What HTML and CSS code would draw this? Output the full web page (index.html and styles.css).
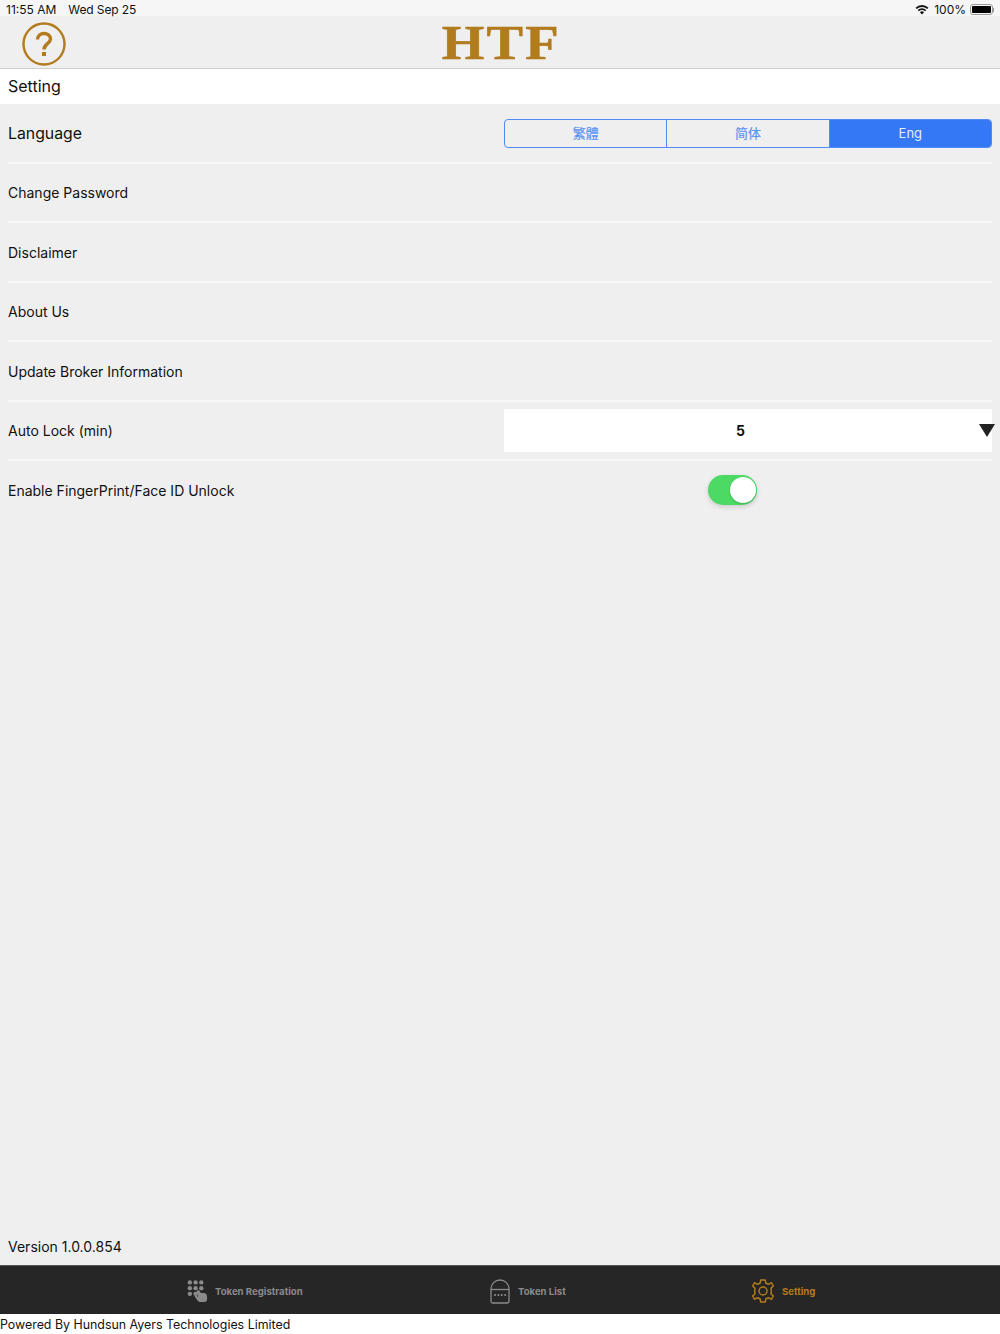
FILE: index.html
```html
<!DOCTYPE html>
<html lang="en">
<head>
    <meta charset="UTF-8">
    <meta name="viewport" content="width=device-width, initial-scale=1.0">
    <title>HTF Setting</title>
    <link rel="stylesheet" href="styles.css">
</head>
<body>
    <div class="app">

        <!-- Status bar -->
        <div class="status-bar">
            <div class="status-time">11:55 AM<span class="status-date">Wed Sep 25</span></div>
            <div class="status-right">
                <svg class="wifi" width="14" height="11" viewBox="0 0 16 12">
                    <path d="M0.6 4 A10.6 10.6 0 0 1 15.4 4 L14 5.5 A8.6 8.6 0 0 0 2 5.5 Z" fill="#111"/>
                    <path d="M3.1 6.6 A7 7 0 0 1 12.9 6.6 L11.5 8 A5 5 0 0 0 4.5 8 Z" fill="#111"/>
                    <path d="M5.6 9.1 A3.4 3.4 0 0 1 10.4 9.1 L8 11.6 Z" fill="#111"/>
                </svg>
                <span>100%</span>
                <div class="battery"><div class="battery-fill"></div></div>
                <div class="battery-tip"></div>
            </div>
        </div>

        <!-- Header -->
        <div class="header">
            <svg class="help-icon" width="44" height="44" viewBox="0 0 44 44">
                <circle cx="22" cy="22" r="20.5" fill="none" stroke="#b27b1e" stroke-width="2.4"/>
                <path d="M15.5 17.5 C15.5 9.5 28.5 9.5 28.5 17 C28.5 21.5 22 22 22 27.5" fill="none" stroke="#b27b1e" stroke-width="3.4"/>
                <rect x="20" y="30" width="4" height="4" fill="#b27b1e"/>
            </svg>
            <div class="logo">HTF</div>
        </div>

        <div class="page-title">Setting</div>

        <!-- Settings list -->
        <div class="content">
            <div class="row">
                <div class="row-label row-label-big">Language</div>
                <div class="row-control">
                    <div class="segment">
                        <div class="segment-item">繁體</div>
                        <div class="segment-item">简体</div>
                        <div class="segment-item active">Eng</div>
                    </div>
                </div>
            </div>
            <div class="row"><div class="row-label">Change Password</div></div>
            <div class="row"><div class="row-label">Disclaimer</div></div>
            <div class="row"><div class="row-label">About Us</div></div>
            <div class="row"><div class="row-label">Update Broker Information</div></div>
            <div class="row">
                <div class="row-label">Auto Lock (min)</div>
                <div class="row-control">
                    <div class="select">
                        <span class="select-value">5</span>
                        <div class="select-arrow"></div>
                    </div>
                </div>
            </div>
            <div class="row row-last">
                <div class="row-label">Enable FingerPrint/Face ID Unlock</div>
                <div class="row-control">
                    <div class="switch"><div class="switch-knob"></div></div>
                </div>
            </div>
        </div>

        <div class="version">Version 1.0.0.854</div>

        <!-- Tab bar -->
        <div class="tabbar">
            <div class="tab tab-register">
                <svg width="21" height="24" viewBox="0 0 22 24" fill="#8a8a8a">
                    <circle cx="3" cy="3" r="2.3"/><circle cx="9" cy="3" r="2.3"/><circle cx="15" cy="3" r="2.3"/>
                    <circle cx="3" cy="9" r="2.3"/><circle cx="9" cy="9" r="2.3"/><circle cx="15" cy="9" r="2.3"/>
                    <circle cx="3" cy="15" r="2.3"/><circle cx="9" cy="15" r="2.3"/>
                    <path d="M10 12 L12.5 11 L14.5 14 L18 14 Q21 14.5 21 18 L21 21 Q21 23.5 18 23.5 L13.5 23.5 Q12 23.5 11 22 L8 17.5 L9.5 16.5 L11.8 18.5 Z"/>
                </svg>
                <span class="tab-label">Token Registration</span>
            </div>
            <div class="tab tab-list">
                <svg width="20" height="25" viewBox="0 0 20 25" fill="none" stroke="#8a8a8a" stroke-width="1.3">
                    <path d="M1 10 A9 9 0 0 1 19 10 L19 22 Q19 24 17 24 L3 24 Q1 24 1 22 Z"/>
                    <path d="M1 10.5 L19 10.5"/>
                    <g fill="#8a8a8a" stroke="none">
                        <circle cx="5" cy="16" r="1.1"/><circle cx="8.4" cy="16" r="1.1"/><circle cx="11.8" cy="16" r="1.1"/><circle cx="15.2" cy="16" r="1.1"/>
                    </g>
                </svg>
                <span class="tab-label">Token List</span>
            </div>
            <div class="tab active">
                <svg width="24" height="24" viewBox="0 0 24 24" fill="none" stroke="#b27b1e" stroke-width="1.5">
                    <path d="M9.8 1 H14.2 L15 4.2 L17.6 5.3 L20.4 3.7 L22.3 7 L20 9.3 L20.3 12 L20 14.7 L22.3 17 L20.4 20.3 L17.6 18.7 L15 19.8 L14.2 23 H9.8 L9 19.8 L6.4 18.7 L3.6 20.3 L1.7 17 L4 14.7 L3.7 12 L4 9.3 L1.7 7 L3.6 3.7 L6.4 5.3 L9 4.2 Z" stroke-linejoin="round"/>
                    <circle cx="12" cy="12" r="4"/>
                </svg>
                <span class="tab-label">Setting</span>
            </div>
        </div>

        <div class="footer">Powered By Hundsun Ayers Technologies Limited</div>
    </div>
</body>
</html>
```

FILE: styles.css
```css
* {
    box-sizing: border-box;
}

body {
    font-family: Inter, "Liberation Sans", sans-serif;
    margin: 0;
    padding: 0;
    background-color: #efefef;
    color: #111;
}

.app {
    width: 1000px;
    height: 1334px;
    display: flex;
    flex-direction: column;
    overflow: hidden;
}

/* Status bar */
.status-bar {
    height: 16px;
    background-color: #f6f6f6;
    display: flex;
    justify-content: space-between;
    align-items: center;
    padding: 3px 6px 0 6px;
    font-size: 12px;
}

.status-date {
    margin-left: 12px;
    letter-spacing: -0.1px;
}

.status-right {
    display: flex;
    align-items: center;
}

.wifi {
    margin-right: 5px;
}

.battery {
    width: 23px;
    height: 11px;
    border: 1px solid #999;
    border-radius: 3px;
    padding: 1px;
    margin-left: 4px;
}

.battery-fill {
    height: 100%;
    background-color: #000;
    border-radius: 1px;
}

.battery-tip {
    width: 1px;
    height: 4px;
    background-color: #999;
}

/* Header */
.header {
    height: 53px;
    border-bottom: 1px solid #cfcfcf;
    display: flex;
    align-items: center;
    justify-content: center;
    position: relative;
}

.help-icon {
    position: absolute;
    left: 22px;
    top: 6px;
}

.logo {
    font-family: "Liberation Serif", serif;
    font-weight: bold;
    font-size: 48px;
    line-height: 52px;
    letter-spacing: 2px;
    color: #b27b1e;
    -webkit-text-stroke: 0.6px #b27b1e;
    transform: translate(1px, 1px) scaleX(1.14);
}

.page-title {
    height: 35px;
    background-color: #fff;
    padding: 0 8px 2px 8px;
    display: flex;
    align-items: center;
    font-size: 16px;
}

/* Settings list */
.content {
    flex: 1;
    padding: 0 8px;
}

.row {
    height: 59.5px;
    display: flex;
    align-items: center;
    border-bottom: 2px solid #f8f8f8;
    font-size: 14px;
}

.row-last {
    border-bottom-color: transparent;
}

.row-label {
    width: 496px;
    margin-top: 1px;
}

.row-label-big {
    margin-top: 2px;
    font-size: 15.8px;
}

.row-control {
    flex: 1;
    position: relative;
}

/* Language segments */
.segment {
    height: 29px;
    margin-top: 2px;
    display: flex;
    border: 1px solid #4d8bf5;
    border-radius: 4px;
    overflow: hidden;
}

.segment-item {
    flex: 1;
    display: flex;
    align-items: center;
    justify-content: center;
    padding-bottom: 2px;
    font-family: Inter, "Noto Sans CJK TC", sans-serif;
    font-size: 13px;
    color: #5b93f0;
    -webkit-text-stroke: 0.2px #5b93f0;
    border-right: 1px solid #4d8bf5;
}

.segment-item.active {
    background-color: #3478f6;
    color: #e4eeff;
    -webkit-text-stroke: 0;
    border-right: none;
}

/* Auto lock select */
.select {
    height: 43px;
    background-color: #fff;
    display: flex;
    align-items: center;
    justify-content: center;
    padding-right: 15px;
    position: relative;
}

.select-value {
    font-weight: bold;
    font-size: 14px;
}

.select-arrow {
    position: absolute;
    right: -3px;
    top: 15px;
    width: 0;
    height: 0;
    border-left: 8px solid transparent;
    border-right: 8px solid transparent;
    border-top: 13px solid #222;
}

/* Switch */
.switch {
    width: 49px;
    height: 30px;
    margin-left: 204px;
    border-radius: 15px;
    background-color: #4cd964;
    box-shadow: 0 2px 5px rgba(0, 0, 0, 0.15);
    position: relative;
}

.switch-knob {
    position: absolute;
    right: 1px;
    top: 2px;
    width: 26px;
    height: 26px;
    border-radius: 50%;
    background-color: #fff;
    box-shadow: 0 1px 2px rgba(0, 0, 0, 0.2);
}

.version {
    height: 38px;
    padding: 0 8px;
    display: flex;
    align-items: center;
    font-size: 14px;
}

/* Tab bar */
.tabbar {
    height: 49px;
    background-color: #262626;
    border-top: 1px solid #555;
    display: flex;
    padding-left: 187px;
}

.tab {
    display: flex;
    align-items: center;
    gap: 7px;
    padding-top: 2px;
}

.tab-register {
    width: 303px;
}

.tab-list {
    width: 261px;
    gap: 8px;
}

.tab-label {
    font-size: 9.6px;
    font-weight: 700;
    color: #8a8a8a;
}

.tab.active .tab-label {
    color: #b27b1e;
}

.footer {
    height: 20px;
    background-color: #fff;
    font-size: 12.4px;
    display: flex;
    align-items: center;
}
```
